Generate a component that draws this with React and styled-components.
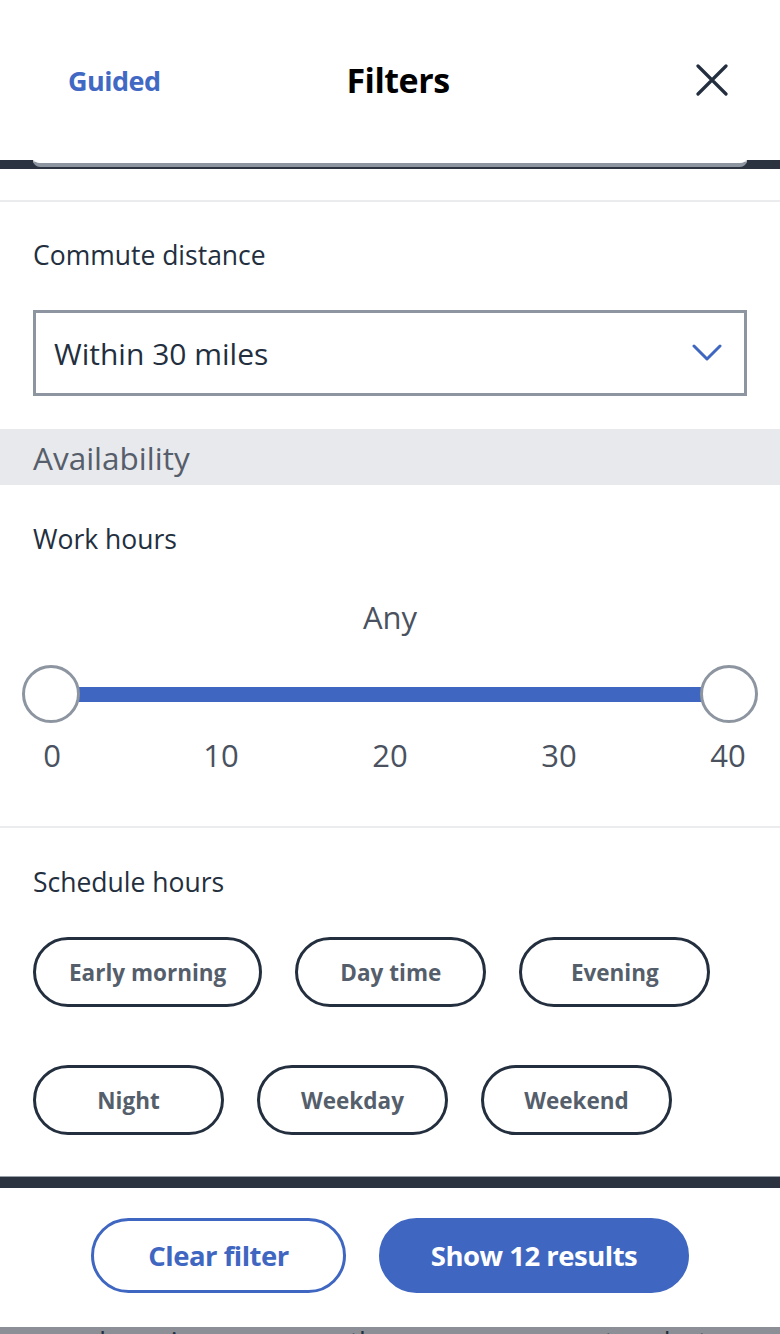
import React from "react"
import styled, { createGlobalStyle } from "styled-components"

const GlobalStyle = createGlobalStyle`
    html, body {
        margin: 0;
        padding: 0;
        background: #ffffff;
    }
    body {
        font-family: "Open Sans", "Noto Sans", Arial, sans-serif;
        color: #232f3e;
    }
`

const Page = styled.div`
    width: 780px;
    height: 1334px;
    overflow: hidden;
    display: flex;
    flex-direction: column;
    background: #ffffff;
`
const Header = styled.header`
    height: 160px;
    display: grid;
    grid-template-columns: 1fr auto 1fr;
    align-items: center;
    padding: 0 52px 0 68px;
`
const GuidedLink = styled.a`
    font-size: 27px;
    font-weight: 700;
    color: #4169c4;
    letter-spacing: -0.5px;
`
const Title = styled.h1`
    margin: 0;
    font-size: 34px;
    font-weight: 700;
    color: #000000;
    letter-spacing: -0.5px;
`
const CloseButton = styled.button`
    justify-self: end;
    border: 0;
    background: none;
    padding: 0;
    width: 32px;
    height: 32px;
    display: flex;
`
const DarkStrip = styled.div`
    height: 9px;
    background: #2b3240;
    padding: 0 33px;
    display: flex;
    flex-direction: column;
`
const PeekBox = styled.div`
    height: 7px;
    background: #ffffff;
    border: 1px solid #d5d8dc;
    border-top: 0;
    border-bottom: 4px solid #8d95a0;
    border-radius: 0 0 8px 8px;
    box-sizing: border-box;
`
const Spacer = styled.div`
    height: ${({ h }) => h}px;
    flex-shrink: 0;
    border-bottom: ${({ line }) => (line ? "2px solid #ebecee" : "0")};
`
const Section = styled.section`
    padding: 0 33px;
    display: flex;
    flex-direction: column;
`
const Label = styled.div`
    font-size: 26.5px;
    line-height: 30px;
    color: #232f3e;
    margin-top: ${({ top }) => top}px;
`
const Select = styled.div`
    margin-top: 40px;
    height: 86px;
    box-sizing: border-box;
    border: 3px solid #8d95a0;
    display: flex;
    align-items: center;
    justify-content: space-between;
    padding: 0 22px 0 18px;
    font-size: 30px;
    color: #232f3e;
`
const SectionBand = styled.div`
    margin-top: 33px;
    height: 56px;
    background: #e8e9ec;
    display: flex;
    align-items: center;
    padding: 0 33px;
    font-size: 31.5px;
    color: #565e6b;
`
const AnyValue = styled.div`
    margin-top: 47px;
    text-align: center;
    font-size: 31px;
    line-height: 32px;
    color: #4a5260;
`
const SliderArea = styled.div`
    margin: 32px -11px 0;
    height: 58px;
    position: relative;
    display: flex;
    align-items: center;
    padding: 0 30px;
`
const Track = styled.div`
    flex: 1;
    height: 15px;
    background: #3f67c1;
`
const Thumb = styled.div`
    position: absolute;
    top: 0;
    ${({ side }) => side}: 0;
    width: 58px;
    height: 58px;
    box-sizing: border-box;
    border-radius: 50%;
    border: 3px solid #8d95a0;
    background: #ffffff;
`
const Ticks = styled.div`
    margin: 15px -11px 0;
    display: flex;
    justify-content: space-between;
`
const Tick = styled.span`
    width: 60px;
    text-align: center;
    font-size: 31px;
    line-height: 34px;
    color: #4a5260;
`
const ChipGrid = styled.div`
    margin-top: 40px;
    display: flex;
    flex-wrap: wrap;
    column-gap: 33px;
    row-gap: 58px;
`
const Chip = styled.button`
    min-width: 191px;
    height: 70px;
    padding: 0 33px;
    box-sizing: border-box;
    border: 3px solid #232f3e;
    border-radius: 35px;
    background: #ffffff;
    font-family: "Open Sans", Arial, sans-serif;
    font-size: 22.5px;
    font-weight: 700;
    color: #555e6b;
`
const FooterBar = styled.div`
    margin-top: 41px;
    height: 11px;
    background: #2b3240;
    border-top: 1px solid #9aa0a8;
`
const Footer = styled.footer`
    height: 139px;
    display: flex;
    justify-content: center;
    align-items: center;
    gap: 33px;
    padding-bottom: 4px;
    box-sizing: border-box;
`
const ActionButton = styled.button`
    height: 75px;
    width: ${({ w }) => w}px;
    border-radius: 38px;
    box-sizing: border-box;
    border: 3px solid #3f67c1;
    background: ${({ primary }) => (primary ? "#3f67c1" : "#ffffff")};
    color: ${({ primary }) => (primary ? "#ffffff" : "#3f67c1")};
    font-family: "Open Sans", Arial, sans-serif;
    font-size: 27.5px;
    font-weight: 700;
    letter-spacing: -0.5px;
`
const BehindText = styled.div`
    flex: 1;
    background: #8c8f95;
    overflow: hidden;
    padding: 1px 0 0 58px;
    font-size: 27px;
    line-height: 27px;
    color: #232f3e;
    white-space: nowrap;
`

const CloseIcon = () => (
    <svg width="32" height="32" viewBox="0 0 32 32">
        <path d="M2 2 L30 30 M30 2 L2 30" stroke="#232f3e" strokeWidth="3.2" strokeLinecap="round" />
    </svg>
)

const Chevron = () => (
    <svg width="30" height="18" viewBox="0 0 30 18">
        <path d="M2 2 L15 15 L28 2" fill="none" stroke="#3f67c1" strokeWidth="3" strokeLinecap="round" strokeLinejoin="round" />
    </svg>
)

const schedule = ["Early morning", "Day time", "Evening", "Night", "Weekday", "Weekend"]
const ticks = [0, 10, 20, 30, 40]

const App = () => (
    <Page>
        <GlobalStyle />
        <Header>
            <GuidedLink>Guided</GuidedLink>
            <Title>Filters</Title>
            <CloseButton aria-label="Close">
                <CloseIcon />
            </CloseButton>
        </Header>
        <DarkStrip>
            <PeekBox />
        </DarkStrip>
        <Spacer h={31} line />
        <Section>
            <Label top={38}>Commute distance</Label>
            <Select>
                <span>Within 30 miles</span>
                <Chevron />
            </Select>
        </Section>
        <SectionBand>Availability</SectionBand>
        <Section>
            <Label top={39}>Work hours</Label>
            <AnyValue>Any</AnyValue>
            <SliderArea>
                <Track />
                <Thumb side="left" />
                <Thumb side="right" />
            </SliderArea>
            <Ticks>
                {ticks.map((t) => (
                    <Tick key={t}>{t}</Tick>
                ))}
            </Ticks>
        </Section>
        <Spacer h={54} line />
        <Section>
            <Label top={39}>Schedule hours</Label>
            <ChipGrid>
                {schedule.map((s) => (
                    <Chip key={s}>{s}</Chip>
                ))}
            </ChipGrid>
        </Section>
        <FooterBar />
        <Footer>
            <ActionButton w={255}>Clear filter</ActionButton>
            <ActionButton w={310} primary>Show 12 results</ActionButton>
        </Footer>
        <BehindText>and earning more pay, there are some great perks to</BehindText>
    </Page>
)

export default App
